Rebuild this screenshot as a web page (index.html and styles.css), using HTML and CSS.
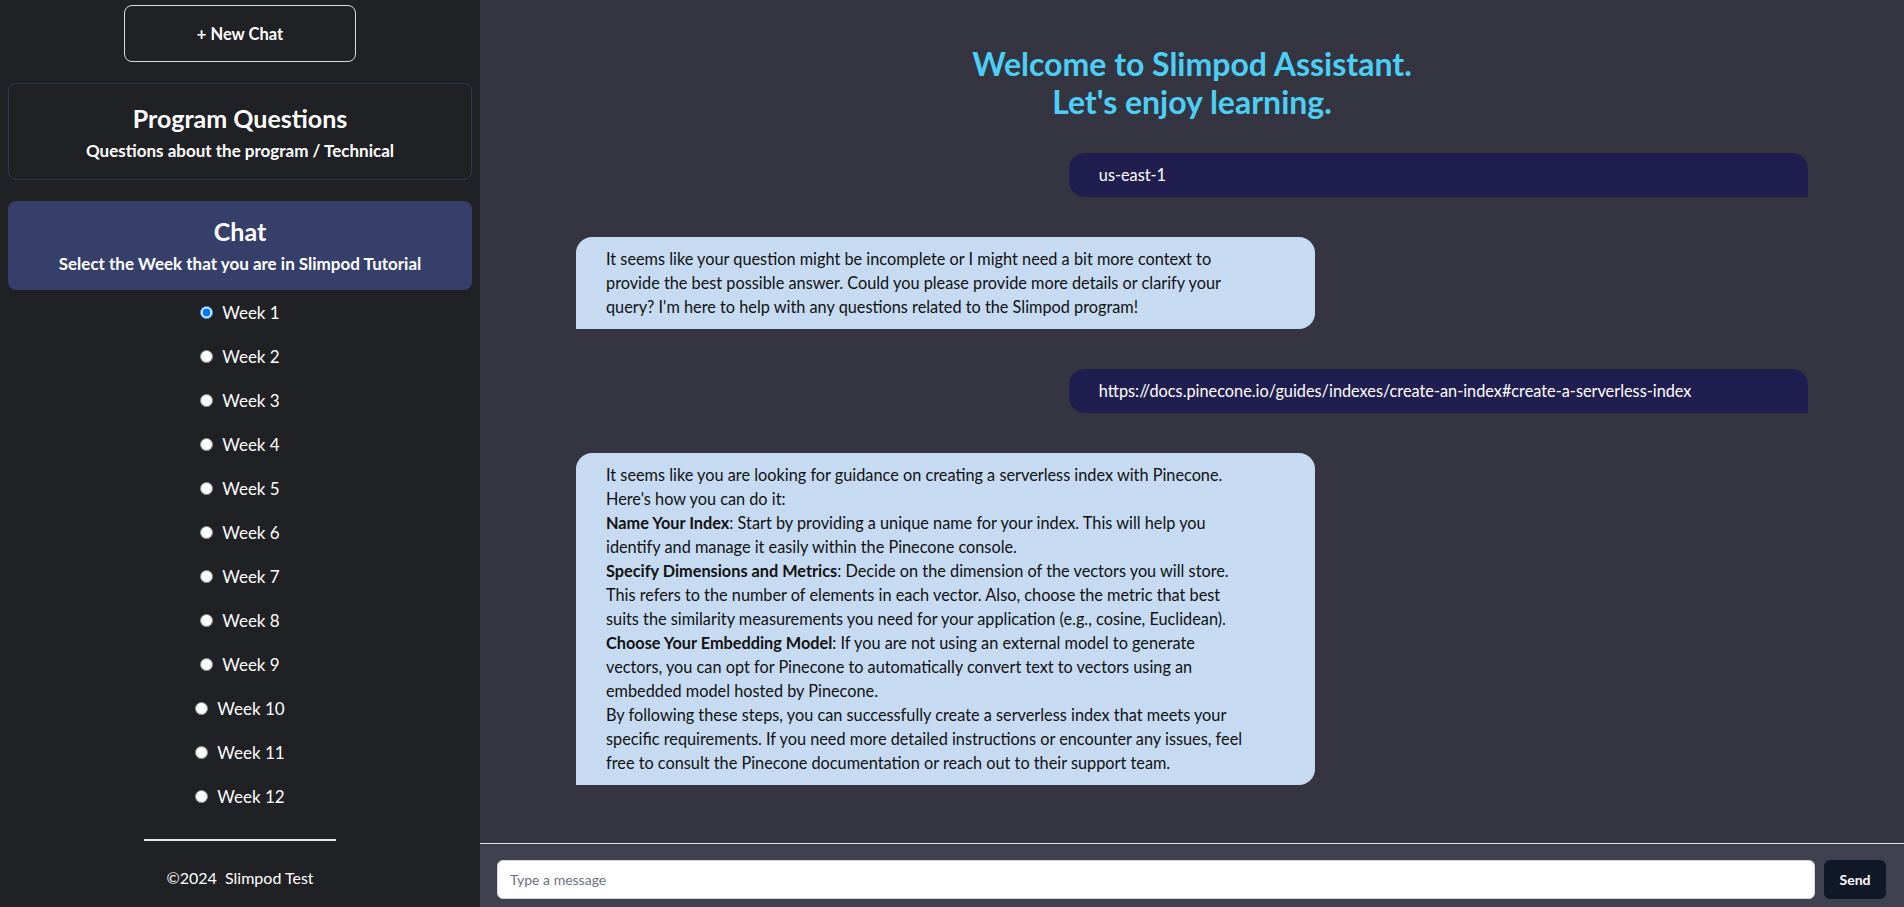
FILE: index.html
```html
<!DOCTYPE html>
<html lang="en">
<head>
<meta charset="utf-8">
<title>Slimpod Assistant</title>
<link rel="stylesheet" href="styles.css">
</head>
<body>
<div class="app">
  <aside class="sidebar">
    <button class="new-chat">+ New Chat</button>
    <div class="card card-outline">
      <h2 class="card-title">Program Questions</h2>
      <p class="card-sub">Questions about the program / Technical</p>
    </div>
    <div class="card card-active">
      <h2 class="card-title">Chat</h2>
      <p class="card-sub">Select the Week that you are in Slimpod Tutorial</p>
    </div>
    <ul class="weeks">
      <li><label><input type="radio" name="week" checked> Week 1</label></li>
      <li><label><input type="radio" name="week"> Week 2</label></li>
      <li><label><input type="radio" name="week"> Week 3</label></li>
      <li><label><input type="radio" name="week"> Week 4</label></li>
      <li><label><input type="radio" name="week"> Week 5</label></li>
      <li><label><input type="radio" name="week"> Week 6</label></li>
      <li><label><input type="radio" name="week"> Week 7</label></li>
      <li><label><input type="radio" name="week"> Week 8</label></li>
      <li><label><input type="radio" name="week"> Week 9</label></li>
      <li><label><input type="radio" name="week"> Week 10</label></li>
      <li><label><input type="radio" name="week"> Week 11</label></li>
      <li><label><input type="radio" name="week"> Week 12</label></li>
    </ul>
    <hr class="divider">
    <p class="footer">©2024&nbsp; Slimpod Test</p>
  </aside>
  <main class="main">
    <div class="chat">
      <h1 class="welcome">Welcome to Slimpod Assistant.<br>Let's enjoy learning.</h1>
      <div class="msg msg-user">us-east-1</div>
      <div class="msg msg-bot">It seems like your question might be incomplete or I might need a bit more context to provide the best possible answer. Could you please provide more details or clarify your query? I'm here to help with any questions related to the Slimpod program!</div>
      <div class="msg msg-user">https://docs.pinecone.io/guides/indexes/create-an-index#create-a-serverless-index</div>
      <div class="msg msg-bot">It seems like you are looking for guidance on creating a serverless index with Pinecone.<br>Here's how you can do it:<br><b>Name Your Index</b>: Start by providing a unique name for your index. This will help you identify and manage it easily within the Pinecone console.<br><b>Specify Dimensions and Metrics</b>: Decide on the dimension of the vectors you will store. This refers to the number of elements in each vector. Also, choose the metric that best suits the similarity measurements you need for your application (e.g., cosine, Euclidean).<br><b>Choose Your Embedding Model</b>: If you are not using an external model to generate vectors, you can opt for Pinecone to automatically convert text to vectors using an embedded model hosted by Pinecone.<br>By following these steps, you can successfully create a serverless index that meets your specific requirements. If you need more detailed instructions or encounter any issues, feel free to consult the Pinecone documentation or reach out to their support team.</div>
    </div>
    <form class="composer">
      <input class="composer-input" type="text" placeholder="Type a message">
      <button class="send" type="button">Send</button>
    </form>
  </main>
</div>
</body>
</html>
```

FILE: styles.css
```css
* { box-sizing: border-box; }
html, body { margin: 0; height: 100%; }
body {
  font-family: "Segoe UI", Lato, "Noto Sans", sans-serif;
  background: #343541;
  overflow: hidden;
}
.app { display: flex; height: 100vh; }

.sidebar {
  width: 480px;
  flex: none;
  background: #202124;
  color: #fff;
  display: flex;
  flex-direction: column;
  align-items: center;
  padding: 5px 8px 0;
}
.new-chat {
  width: 232px;
  height: 57px;
  background: transparent;
  border: 1px solid #d9dbe0;
  border-radius: 8px;
  color: #fff;
  font-family: inherit;
  font-weight: 700;
  font-size: 16.5px;
}
.card {
  width: 100%;
  border-radius: 8px;
  text-align: center;
}
.card-outline {
  margin-top: 21px;
  height: 97px;
  border: 1px solid #2e3a52;
  padding-top: 19px;
}
.card-active {
  margin-top: 21px;
  height: 89px;
  background: #353f69;
  padding-top: 15px;
}
.card-title {
  margin: 0;
  font-size: 25px;
  line-height: 30px;
  font-weight: 700;
}
.card-sub {
  margin: 8px 0 0;
  font-size: 17px;
  line-height: 20px;
  font-weight: 700;
}
.weeks {
  list-style: none;
  margin: 0;
  padding: 0;
  width: 100%;
}
.weeks li {
  height: 44px;
  display: flex;
  align-items: center;
  justify-content: center;
  font-size: 17px;
}
.weeks label { display: flex; align-items: center; gap: 5px; }
.weeks input { margin: 0 4px 0 0; width: 13px; height: 13px; }
.divider {
  width: 192px;
  margin: 21px 0 0;
  border: 0;
  height: 2px;
  background: #e8e8e8;
}
.footer {
  margin: 27px 0 0;
  font-size: 16px;
}

.main {
  flex: 1;
  display: flex;
  flex-direction: column;
  min-width: 0;
}
.chat {
  flex: 1;
  overflow: hidden;
  padding: 45px 96px 0;
  display: flex;
  flex-direction: column;
  gap: 40px;
}
.welcome {
  margin: 0 0 -8px;
  text-align: center;
  color: #4ccff5;
  font-size: 32px;
  line-height: 38px;
  font-weight: 700;
}
.msg {
  width: 60%;
  flex: none;
  padding: 10px 30px;
  font-size: 16.3px;
  line-height: 24px;
}
.msg-user {
  margin-left: auto;
  background: #201e4f;
  color: #fff;
  border-radius: 16px 16px 0 16px;
}
.msg-bot {
  background: #c6dbf2;
  color: #111;
  border-radius: 16px 16px 16px 0;
  padding-right: 69px;
}
.composer {
  flex: none;
  height: 64px;
  margin: 0;
  border-top: 1px solid #e6e6e6;
  background: #40414f;
  display: flex;
  gap: 9px;
  padding: 16px 18px 8px 17px;
}
.composer-input {
  flex: 1;
  height: 39px;
  border: 1px solid #d1d5db;
  border-radius: 6px;
  background: #fff;
  padding: 0 12px;
  font-family: inherit;
  font-size: 14px;
}
.composer-input::placeholder { color: #6b7280; }
.send {
  width: 62px;
  height: 39px;
  border: 0;
  border-radius: 6px;
  background: #111827;
  color: #fff;
  font-family: inherit;
  font-weight: 700;
  font-size: 14px;
}
```
